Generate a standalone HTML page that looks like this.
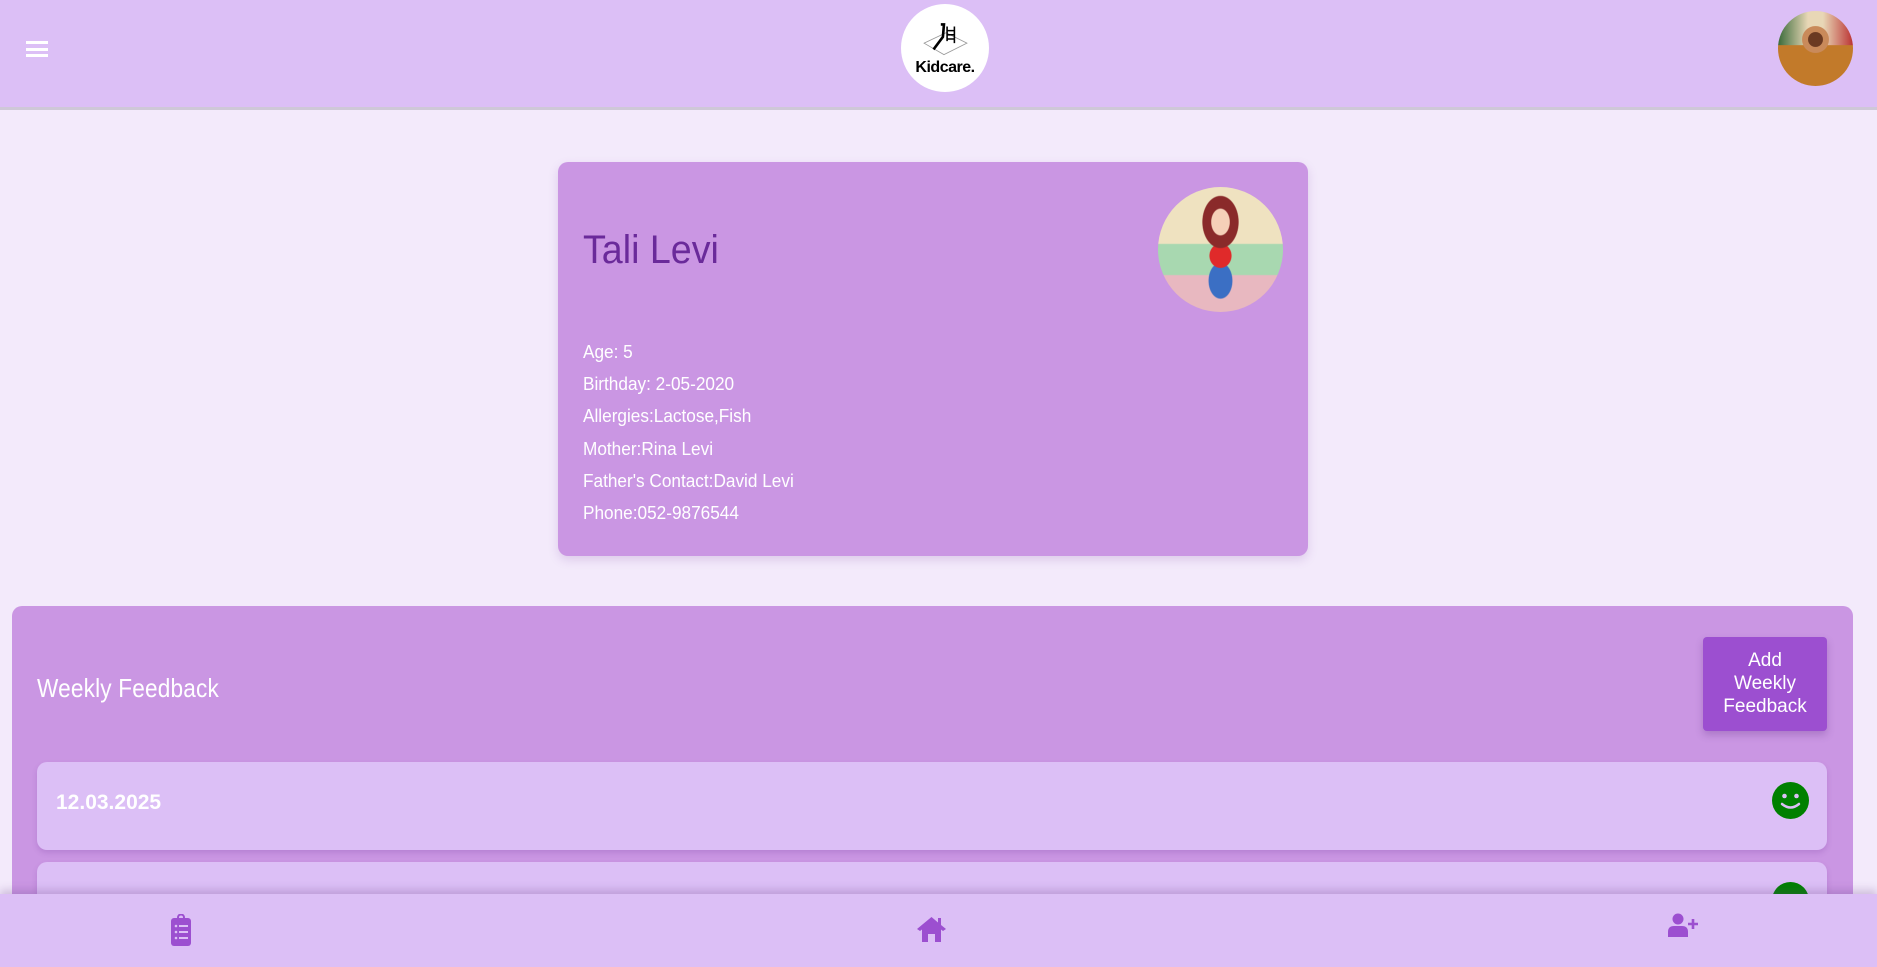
<!DOCTYPE html>
<html><head><meta charset="utf-8"><style>
*{margin:0;padding:0;box-sizing:border-box}
html,body{width:1877px;height:967px;overflow:hidden}
body{background:#f3eafb;font-family:"Liberation Sans",sans-serif;position:relative}
.hdr{position:absolute;left:0;top:0;width:1877px;height:110px;background:#dcbff6;border-bottom:3px solid #cfc8d8}
.ham{position:absolute;left:26px;width:22px;height:2.5px;background:#fff}
.logo{position:absolute;left:901px;top:4px;width:88px;height:88px;border-radius:50%;background:#fff}
.logo span{position:absolute;left:0;width:88px;top:55px;text-align:center;font-size:16px;font-weight:bold;letter-spacing:-0.5px;color:#000}
.av{position:absolute;left:1778px;top:11px;width:75px;height:75px;border-radius:50%;background:radial-gradient(circle at 50% 38%,#6b3a22 0 12%,#c98a5a 13% 22%,transparent 23%),linear-gradient(180deg,transparent 45%,#c27a2a 46%),linear-gradient(90deg,#3a6a3a,#e8d7b6 40%,#e8d7b6 60%,#b33 100%)}
.card{position:absolute;left:558px;top:162px;width:750px;height:394px;background:#ca96e3;border-radius:10px;box-shadow:0 4px 10px rgba(120,60,160,.18)}
.name{position:absolute;left:25px;top:66px;font-size:40px;color:#6a2a9a;transform:scaleX(0.94);transform-origin:left}
.kid{position:absolute;left:600px;top:25px;width:125px;height:125px;border-radius:50%;background:radial-gradient(ellipse at 50% 28%,#f5d0b8 0 10%,#8a2a2a 11% 20%,transparent 21%),radial-gradient(ellipse at 50% 55%,#e02a2a 0 12%,transparent 13%),radial-gradient(ellipse at 50% 75%,#3b6fc4 0 13%,transparent 14%),linear-gradient(180deg,#efe2c0 0 45%,#a8d8b0 46% 70%,#e8b8c0 71%)}
.det{position:absolute;left:25px;top:174px;color:#fff;font-size:18.5px;line-height:32.2px;transform:scaleX(0.93);transform-origin:left}
.fb{position:absolute;left:12px;top:606px;width:1841px;height:400px;background:#ca96e3;border-radius:10px}
.fbt{position:absolute;left:25px;top:67px;font-size:26px;color:#fff;transform:scaleX(0.87);transform-origin:left;letter-spacing:0.2px}
.btn{position:absolute;left:1691px;top:31px;width:124px;height:94px;background:#9c4fd0;border-radius:4px;color:#fff;font-size:19px;line-height:23px;text-align:center;padding-top:12px;box-shadow:0 4px 8px rgba(80,30,120,.25)}
.item{position:absolute;left:25px;width:1790px;height:88px;background:#dcbff6;border-radius:10px;box-shadow:0 3px 6px rgba(110,50,150,.2)}
.item b{position:absolute;left:19px;top:29px;color:#fff;font-size:21px}
.sm{position:absolute;left:1735px;top:20px;width:37px;height:37px;border-radius:50%;background:#008000}
.nav{position:absolute;left:0;top:894px;width:1877px;height:73px;background:#dcbff6;box-shadow:0 -4px 8px rgba(100,60,130,.25)}
</style></head><body>
<div class="hdr">
<div class="ham" style="top:41px"></div><div class="ham" style="top:48px"></div><div class="ham" style="top:54px"></div>
<div class="logo">
<svg style="position:absolute;left:20px;top:15px" width="48" height="40" viewBox="0 0 46 36"><path d="M3 22 L24 12 L44 22 L22 33 Z" fill="none" stroke="#999" stroke-width="0.8"/><path d="M19 4 L22 4 L21 16 L12 28" fill="none" stroke="#000" stroke-width="2.5"/><path d="M25 6 V20 M32 6 V22 M25 10 H32 M25 14 H32 M25 18 H32" stroke="#000" stroke-width="1.5"/></svg>
<span>Kidcare.</span></div>
<div class="av"></div>
</div>
<div class="card">
<div class="name">Tali Levi</div>
<div class="kid"></div>
<div class="det">Age: 5<br>Birthday: 2-05-2020<br>Allergies:Lactose,Fish<br>Mother:Rina Levi<br>Father's Contact:David Levi<br>Phone:052-9876544</div>
</div>
<div class="fb">
<div class="fbt">Weekly Feedback</div>
<div class="btn">Add<br>Weekly<br>Feedback</div>
<div class="item" style="top:156px"><b>12.03.2025</b><div class="sm"><svg width="37" height="37" viewBox="0 0 37 37"><circle cx="12.5" cy="14" r="2.3" fill="#dcbff6"/><circle cx="24.5" cy="14" r="2.3" fill="#dcbff6"/><path d="M10 22 Q18.5 29 27 22" fill="none" stroke="#dcbff6" stroke-width="2.5" stroke-linecap="round"/></svg></div></div>
<div class="item" style="top:256px"><b>05.03.2025</b><div class="sm"></div></div>
</div>
<div class="nav">
<svg style="position:absolute;left:170px;top:20px" width="22" height="32" viewBox="0 0 22 32"><rect x="1" y="4" width="20" height="28" rx="3" fill="#9c4fd0"/><circle cx="11" cy="3.5" r="3" fill="none" stroke="#9c4fd0" stroke-width="2"/><g fill="#dcbff6"><circle cx="6" cy="12" r="1.3"/><circle cx="6" cy="18" r="1.3"/><circle cx="6" cy="24" r="1.3"/><rect x="9" y="11" width="9" height="2"/><rect x="9" y="17" width="9" height="2"/><rect x="9" y="23" width="9" height="2"/></g></svg>
<svg style="position:absolute;left:916px;top:22px" width="31" height="27" viewBox="0 0 31 27"><path d="M15.5 1 L1 13 L4 15 L6 13.5 V26 H12 V18 H19 V26 H25 V13.5 L27 15 L30 13 L25 9 V2 H22 V6.5 Z" fill="#9c4fd0"/></svg>
<svg style="position:absolute;left:1667px;top:19px" width="32" height="24" viewBox="0 0 32 24"><circle cx="11" cy="6" r="5.5" fill="#9c4fd0"/><path d="M1 24 V19 Q1 13 7 13 H15 Q21 13 21 19 V24 Z" fill="#9c4fd0"/><path d="M26 6 V16 M21 11 H31" stroke="#9c4fd0" stroke-width="2.6"/></svg>
</div>
</body></html>
